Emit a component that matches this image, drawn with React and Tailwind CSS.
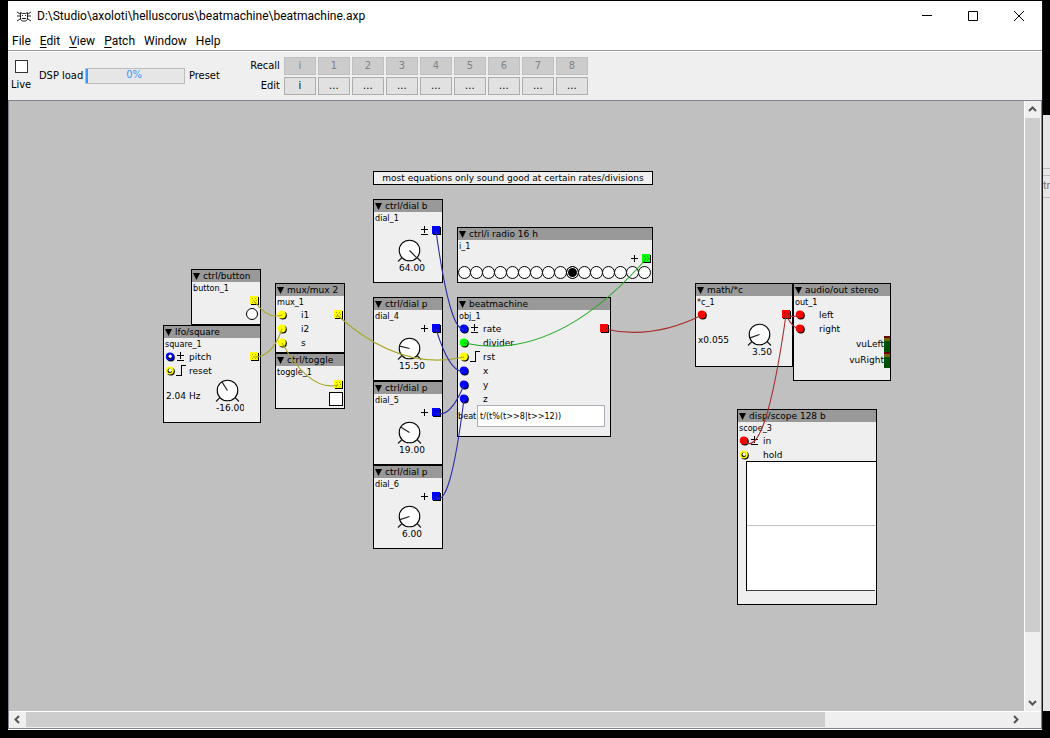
import React from 'react';

const FILL = {
  blue: '#0000ff',
  yellow: '#ffff00',
  green: '#00ff00',
  red: '#ff0000',
};

const WIRE = {
  blue: '#2c2ca8',
  yellow: '#a8a82c',
  green: '#24a824',
  red: '#a82c2c',
};

function Inlet({ color, open }) {
  return (
    <svg width="12" height="14" viewBox="0 0 12 14" className="shrink-0">
      <circle cx="6.8" cy="7.6" r="4" fill="#000" />
      <circle cx="5.8" cy="6.6" r="4" fill={FILL[color]} />
      {open && <circle cx="5.8" cy="6.8" r="2.3" fill="#000" />}
      {open && <circle cx="6.2" cy="6.3" r="1.7" fill="#fff" />}
    </svg>
  );
}

function Outlet({ color }) {
  const dot = { blue: '#0000a0', yellow: '#a0a000', green: '#00a000', red: '#a00000' }[color];
  return (
    <svg width="12" height="14" viewBox="0 0 12 14" className="shrink-0">
      <rect x="3" y="3" width="8" height="8" fill="#000" />
      <rect x="2" y="2" width="8" height="8" fill={FILL[color]} />
      <g fill={dot}>
        <rect x="4" y="4" width="1" height="1" />
        <rect x="7" y="4" width="1" height="1" />
        <rect x="5" y="6" width="1" height="1" />
        <rect x="8" y="6" width="1" height="1" />
        <rect x="4" y="8" width="1" height="1" />
        <rect x="7" y="8" width="1" height="1" />
      </g>
    </svg>
  );
}

const SIGNALS = {
  bipolar: 'M1 5.5h7M4.5 2v7M1 10.5h7',
  positive: 'M1 6.5h7M4.5 3v7',
  rising: 'M0 11.5h5.5v-10h4',
};

function Signal({ kind }) {
  return (
    <svg width="10" height="14" viewBox="0 0 10 14" className="shrink-0">
      {kind && <path d={SIGNALS[kind]} fill="none" stroke="#000" strokeWidth="1" shapeRendering="crispEdges" />}
    </svg>
  );
}

function InletRow({ color, signal, label, open, outlet }) {
  return (
    <div className="flex h-3.5 items-center">
      <Inlet color={color} open={open} />
      <Signal kind={signal} />
      <span className="pl-[3px]">{label}</span>
      {outlet && (
        <span className="ml-auto flex">
          <Outlet color={outlet} />
        </span>
      )}
    </div>
  );
}

function OutletRow({ color, signal }) {
  return (
    <div className="flex h-3.5 items-center justify-end">
      {signal && <Signal kind={signal} />}
      <Outlet color={color} />
    </div>
  );
}

function Dial({ angle, value, label }) {
  const a = (angle * Math.PI) / 180;
  return (
    <div className="flex w-8 flex-col items-center">
      <svg width="28" height="24" viewBox="0 0 28 24" className="shrink-0" role="img" aria-label={label}>
        <path d="M6 19.5L2 23.5M21 19.5L25 23.5" stroke="#222" strokeWidth="1.2" />
        <circle cx="13.5" cy="12.5" r="10.3" fill="#fff" stroke="#000" strokeWidth="1.1" />
        <line x1="13.5" y1="12.5" x2={13.5 + 10 * Math.sin(a)} y2={12.5 - 10 * Math.cos(a)} stroke="#222" strokeWidth="1.2" />
      </svg>
      <span className="h-3 max-w-full overflow-hidden pl-1 whitespace-nowrap">{value}</span>
    </div>
  );
}

function Node({ place, type, name, children }) {
  return (
    <section className={`absolute flex flex-col overflow-hidden border border-black bg-[#efefef] ${place}`}>
      <header className="flex h-3 shrink-0 items-center gap-[3px] bg-[#999] pl-px whitespace-nowrap">
        <svg width="7" height="7" viewBox="0 0 7 7" className="shrink-0">
          <path d="M0 0h7L3.5 7z" fill="#000" />
        </svg>
        <h2>{type}</h2>
      </header>
      <p className="h-3 shrink-0 pl-px font-['DejaVu_Sans_Condensed','DejaVu_Sans',sans-serif]">{name}</p>
      {children}
    </section>
  );
}

function DialNode({ place, type, name, signal, angle, value }) {
  return (
    <Node place={place} type={type} name={name}>
      <OutletRow color="blue" signal={signal} />
      <div className="flex justify-center pl-1">
        <Dial angle={angle} value={value} label={name} />
      </div>
    </Node>
  );
}

function Vu({ label }) {
  return (
    <div className="flex h-4 items-center justify-end">
      {label}
      <div className="flex h-4 w-1.5 flex-col bg-[#005000]">
        <div className="h-0.5 bg-[#700000]" />
        <div className="h-[3px] bg-[#6b6b00]" />
      </div>
    </div>
  );
}

const WIRES = [
  ['yellow', 'M254 301Q268 320 282 315'],
  ['yellow', 'M253 357Q272 358 282 329'],
  ['yellow', 'M337 315Q400 372 464 357'],
  ['yellow', 'M282 343Q310 392 338 385'],
  ['blue', 'M436 231Q450 332 464 329'],
  ['blue', 'M436 329Q450 374 464 371'],
  ['blue', 'M436 413Q450 419 464 385'],
  ['blue', 'M436 497Q450 510 464 399'],
  ['green', 'M464 343Q555 363 646 259'],
  ['red', 'M604 329Q653 340 702 315'],
  ['red', 'M786 315Q793 318 800 315'],
  ['red', 'M786 315Q793 329 800 329'],
  ['red', 'M786 315Q765 462 744 441'],
];

function Wires() {
  return (
    <svg className="pointer-events-none absolute top-0 left-0" width="1015" height="610" viewBox="9 101 1015 610">
      {WIRES.map(([color, d]) => (
        <path key={d} d={d} fill="none" stroke={WIRE[color]} strokeWidth="1.1" />
      ))}
    </svg>
  );
}

function Patch() {
  return (
    <main className="relative min-w-0 flex-1 overflow-hidden bg-[#c0c0c0] font-['DejaVu_Sans',sans-serif] text-[9px] leading-3 text-black">
      <p className="absolute top-[70px] left-[364px] h-3.5 w-[280px] border border-black bg-[#efefef] text-center whitespace-nowrap">
        most equations only sound good at certain rates/divisions
      </p>

      <DialNode place="top-[98px] left-[364px] h-[84px] w-[70px]" type="ctrl/dial b" name="dial_1" signal="bipolar" angle={135} value="64.00" />
      <DialNode place="top-[196px] left-[364px] h-[84px] w-[70px]" type="ctrl/dial p" name="dial_4" signal="positive" angle={-76} value="15.50" />
      <DialNode place="top-[280px] left-[364px] h-[84px] w-[70px]" type="ctrl/dial p" name="dial_5" signal="positive" angle={-58} value="19.00" />
      <DialNode place="top-[364px] left-[364px] h-[84px] w-[70px]" type="ctrl/dial p" name="dial_6" signal="positive" angle={-108} value="6.00" />

      <Node place="top-[126px] left-[448px] h-14 w-[196px]" type="ctrl/i radio 16 h" name="i_1">
        <OutletRow color="green" signal="positive" />
        <div className="flex">
          {Array.from({ length: 16 }, (_, i) => (
            <input
              key={i}
              type="radio"
              name="i_1"
              aria-label={`Value ${i}`}
              defaultChecked={i === 9}
              className="-mr-px size-[13px] shrink-0 appearance-none rounded-full border border-black bg-white checked:bg-black checked:shadow-[inset_0_0_0_1px_white]"
            />
          ))}
        </div>
      </Node>

      <Node place="top-[168px] left-[182px] h-14 w-[70px]" type="ctrl/button" name="button_1">
        <OutletRow color="yellow" />
        <div className="flex justify-end pr-0.5">
          <button aria-label="button_1" className="size-3 rounded-full border border-black bg-white" />
        </div>
      </Node>

      <Node place="top-[224px] left-[154px] h-[98px] w-[98px]" type="lfo/square" name="square_1">
        <InletRow color="blue" signal="bipolar" label="pitch" open outlet="yellow" />
        <InletRow color="yellow" signal="rising" label="reset" open />
        <div className="flex items-center justify-between pr-4 pl-0.5">
          <span>2.04 Hz</span>
          <Dial angle={-33} value="-16.00" label="pitch" />
        </div>
      </Node>

      <Node place="top-[182px] left-[266px] h-[70px] w-[70px]" type="mux/mux 2" name="mux_1">
        <InletRow color="yellow" label="i1" outlet="yellow" />
        <InletRow color="yellow" label="i2" />
        <InletRow color="yellow" label="s" />
      </Node>

      <Node place="top-[252px] left-[266px] h-14 w-[70px]" type="ctrl/toggle" name="toggle_1">
        <OutletRow color="yellow" />
        <div className="flex justify-end pr-px">
          <input type="checkbox" aria-label="toggle_1" className="size-3.5 appearance-none border border-black bg-white" />
        </div>
      </Node>

      <Node place="top-[196px] left-[448px] h-[140px] w-[154px]" type="beatmachine" name="obj_1">
        <InletRow color="blue" signal="bipolar" label="rate" outlet="red" />
        <InletRow color="green" label="divider" />
        <InletRow color="yellow" signal="rising" label="rst" />
        <InletRow color="blue" label="x" />
        <InletRow color="blue" label="y" />
        <InletRow color="blue" label="z" />
        <label className="-mt-px flex items-center pr-[5px] font-['DejaVu_Sans_Condensed','DejaVu_Sans',sans-serif]">
          <span className="w-[19px] shrink-0">beat</span>
          <input
            type="text"
            defaultValue="t/(t%(t>>8|t>>12))"
            className="h-[22px] min-w-0 flex-1 border border-[#aaaeb4] bg-white px-0.5 outline-none"
          />
        </label>
      </Node>

      <Node place="top-[182px] left-[686px] h-[84px] w-[98px]" type="math/*c" name="*c_1">
        <InletRow color="red" outlet="red" />
        <div className="flex items-center justify-between pr-4 pl-0.5">
          <span>x0.055</span>
          <Dial angle={-110} value="3.50" label="amp" />
        </div>
      </Node>

      <Node place="top-[182px] left-[784px] h-[98px] w-[98px]" type="audio/out stereo" name="out_1">
        <InletRow color="red" label="left" />
        <InletRow color="red" label="right" />
        <Vu label="vuLeft" />
        <Vu label="vuRight" />
      </Node>

      <Node place="top-[308px] left-[728px] h-[196px] w-[140px]" type="disp/scope 128 b" name="scope_3">
        <InletRow color="red" signal="bipolar" label="in" />
        <InletRow color="yellow" label="hold" open />
        <div className="-mt-px ml-2 flex h-[130px] shrink-0 flex-col border-t border-l border-black bg-white">
          <div className="h-16 border-b border-[#c0c0c0]" />
          <div className="mr-px flex-1 border-b border-[#404040]" />
        </div>
      </Node>

      <Wires />
    </main>
  );
}

const ARROWS = {
  up: 'M4 10l3.5-3.5L11 10',
  down: 'M4 6l3.5 3.5L11 6',
  left: 'M10 4L6.5 7.5L10 11',
  right: 'M5 4l3.5 3.5L5 11',
};

function ScrollButton({ dir }) {
  return (
    <button aria-label={`Scroll ${dir}`} className="size-4 shrink-0">
      <svg width="16" height="16" viewBox="0 0 16 16">
        <path d={ARROWS[dir]} fill="none" stroke="#555" strokeWidth="2" />
      </svg>
    </button>
  );
}

function Toolbar() {
  const presets = ['i', '1', '2', '3', '4', '5', '6', '7', '8'];
  return (
    <div className="flex h-[49px] shrink-0 items-center border-t border-white bg-[#efefef] pl-0.5 font-['DejaVu_Sans_Condensed','DejaVu_Sans',sans-serif] text-[11px] leading-4 text-black">
      <label className="flex w-[22px] flex-col items-center gap-1 pt-px">
        <input type="checkbox" className="size-[13px] appearance-none border border-[#333] bg-white" />
        Live
      </label>
      <span className="ml-[7px] w-[46px] whitespace-nowrap">DSP load</span>
      <div className="flex h-4 w-[100px] items-center border border-[#bcbcbc] bg-[#e6e6e6]">
        <div className="h-full w-0.5 bg-[#3399ff]" />
        <span className="flex-1 pr-1 pb-0.5 text-center text-[#3399ff]">0%</span>
      </div>
      <span className="ml-1">Preset</span>
      <div className="ml-6 grid grid-cols-[38px_repeat(9,32px)] items-center gap-x-0.5 gap-y-0.5">
        <span className="pr-0.5 text-right">Recall</span>
        {presets.map((p) => (
          <button key={p} disabled className="h-[18px] border border-[#bfbfbf] bg-[#cccccc] text-[#838383]">
            {p}
          </button>
        ))}
        <span className="pr-0.5 text-right">Edit</span>
        {presets.map((p) => (
          <button key={p} aria-label={`Edit preset ${p}`} className="h-[18px] border border-[#adadad] bg-[#e1e1e1]">
            {p === 'i' ? 'i' : '...'}
          </button>
        ))}
      </div>
    </div>
  );
}

function TitleBar() {
  return (
    <div className="flex h-[30px] shrink-0 items-center bg-white pl-2">
      <svg width="16" height="13" viewBox="0 0 16 13" fill="none" stroke="#222" strokeWidth="1">
        <path d="M1 2l3 2M1 6h3M1 11l3-2M15 2l-3 2M15 6h-3M15 11l-3-2M4.5 2.5l2 1h3l2-1v7l-2 1.5h-3l-2-1.5z" />
        <path d="M6 5.5h1M9 5.5h1M6 8.5h4" />
      </svg>
      <h1 className="ml-[5px] flex-1 truncate text-[12px]">D:\Studio\axoloti\helluscorus\beatmachine\beatmachine.axp</h1>
      <button aria-label="Minimize" className="flex h-full w-[46px] items-center justify-center">
        <svg width="10" height="10" viewBox="0 0 10 10"><path d="M0 4.5h10" stroke="#000" /></svg>
      </button>
      <button aria-label="Maximize" className="flex h-full w-[46px] items-center justify-center">
        <svg width="10" height="10" viewBox="0 0 10 10"><path d="M.5.5h9v9h-9z" fill="none" stroke="#000" /></svg>
      </button>
      <button aria-label="Close" className="flex h-full w-[46px] items-center justify-center">
        <svg width="10" height="10" viewBox="0 0 10 10"><path d="M0 0l10 10M10 0L0 10" stroke="#000" /></svg>
      </button>
    </div>
  );
}

function MenuBar() {
  return (
    <nav className="flex h-5 shrink-0 items-center gap-[9px] border-b border-[#999] bg-white pl-1 text-[12px]">
      <button>File</button>
      <button><u className="underline-offset-2">E</u>dit</button>
      <button><u className="underline-offset-2">V</u>iew</button>
      <button><u className="underline-offset-2">P</u>atch</button>
      <button>Window</button>
      <button>Help</button>
    </nav>
  );
}

export default function App() {
  return (
    <div className="flex h-screen bg-black pt-px pb-2 pl-2 font-[Roboto,'Open_Sans',sans-serif] text-black">
      <div className="flex min-w-0 flex-1 flex-col border-r border-[#15171c] bg-white">
        <TitleBar />
        <MenuBar />
        <Toolbar />
        <div className="mb-px flex min-h-0 flex-1 flex-col border border-[#7f8590] bg-[#efefef]">
          <div className="flex min-h-0 flex-1">
            <Patch />
            <div className="flex w-[17px] shrink-0 flex-col border-l border-white">
              <ScrollButton dir="up" />
              <div className="min-h-0 flex-1 pt-px">
                <div className="h-[89%] w-[15px] bg-[#cdcdcd]" />
              </div>
              <ScrollButton dir="down" />
            </div>
          </div>
          <div className="flex h-[17px] shrink-0 border-t border-white pr-4">
            <ScrollButton dir="left" />
            <div className="min-w-0 flex-1 pl-px">
              <div className="h-[15px] w-[81.3%] bg-[#cdcdcd]" />
            </div>
            <ScrollButton dir="right" />
          </div>
        </div>
      </div>
      <div className="w-[7px] shrink-0 overflow-hidden pt-[114px] pb-[19px]">
        <div className="h-full overflow-hidden bg-[#e6e6e6] pt-[53px] text-[11px] text-[#777]">
          <div className="border-y border-[#bbb] py-[3px]" />
          <div className="border-b border-[#bbb] pb-px leading-5">tr</div>
        </div>
      </div>
    </div>
  );
}
